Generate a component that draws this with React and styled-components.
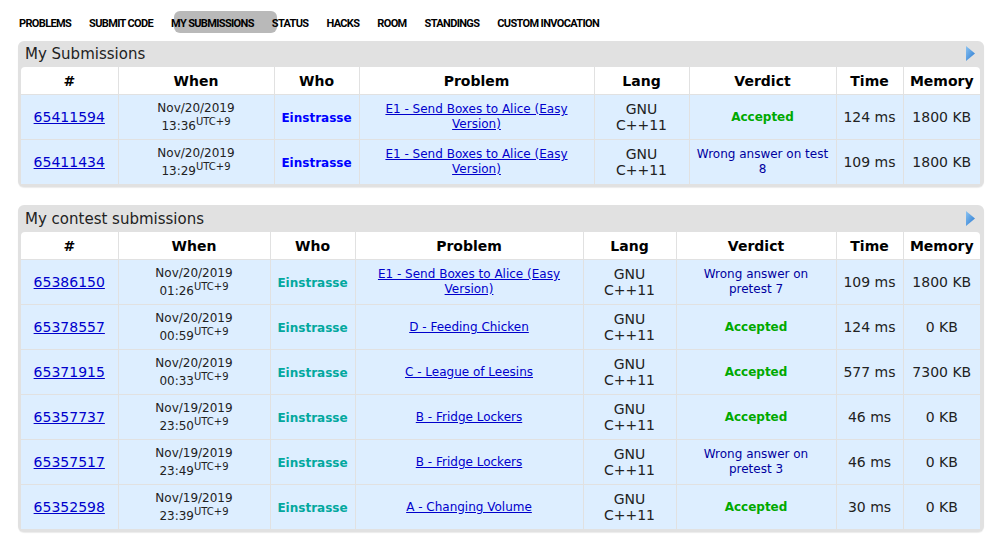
import React from 'react'
import styled, { createGlobalStyle } from 'styled-components'

const GlobalStyle = createGlobalStyle`
    html, body {
        margin: 0;
        padding: 0;
        background: #fff;
    }
    body {
        font-family: "DejaVu Sans", Verdana, sans-serif;
        color: #222;
    }
`

const Page = styled.div`
    padding: 5px 10px 12px 18px;
`

const Menu = styled.ul`
    display: flex;
    align-items: center;
    gap: 18px;
    height: 36px;
    margin: 0;
    padding: 0 0 0 1px;
    list-style: none;
`

const MenuItem = styled.li`
    position: relative;
    font-family: Roboto, "DejaVu Sans Condensed", sans-serif;
    font-weight: bold;
    font-size: 11px;
    line-height: 14px;
    color: #000;
    letter-spacing: -0.65px;
    margin-top: 1px;

    & span {
        position: relative;
    }

    ${(p) => p.$active && `
        &::before {
            content: '';
            position: absolute;
            left: 3px;
            right: -23px;
            top: 50%;
            margin-top: -12.5px;
            height: 22px;
            border-radius: 6px;
            background: #b9b9b9;
        }
    `}
`

const Panel = styled.div`
    background: #e1e1e1;
    border-radius: 6px;
    padding: 0 4px 3px 3px;
    box-shadow: 0 1px 1px rgba(0, 0, 0, 0.08);
    & + & {
        margin-top: 18px;
    }
`

const Caption = styled.div`
    display: flex;
    align-items: center;
    justify-content: space-between;
    height: ${(p) => p.$h}px;
    padding: 0 5px 0 4px;
    font-size: 15px;
    color: #222;
`

const Arrow = styled.svg`
    width: 9px;
    height: 15px;
    margin-top: -1px;
`

const Table = styled.table`
    width: 959px;
    border-collapse: collapse;
    table-layout: fixed;
    background: #fff;
    border-radius: 4px 4px 0 0;
`

const Th = styled.th`
    height: 27px;
    padding: 0;
    font-size: 14px;
    font-weight: bold;
    color: #000;
    text-align: center;
    border-left: 1px solid #e1e1e1;
    border-bottom: 1px solid #e1e1e1;
    &:first-child {
        border-left: none;
    }
`

const Td = styled.td`
    height: 44px;
    padding: 0 6px;
    background: #ddeeff;
    text-align: center;
    vertical-align: middle;
    font-size: ${(p) => p.$size || 14}px;
    line-height: ${(p) => (p.$size === 12 ? 15 : 16)}px;
    border-left: 1px solid #e1e1e1;
    border-top: 1px solid #e1e1e1;
    &:first-child {
        border-left: none;
    }
`

const Link = styled.a`
    color: #0000cc;
    text-decoration: underline;
`

const When = styled.div`
    font-size: 12px;
    line-height: 17px;
    color: #222;

    & sup {
        font-size: 10px;
        line-height: 10px;
        vertical-align: 5px;
    }
`

const Who = styled.span`
    font-size: 12px;
    font-weight: bold;
    color: ${(p) => p.$color};
`

const Verdict = styled.span`
    font-size: 12px;
    line-height: 15px;
    color: ${(p) => (p.$ok ? '#00a900' : '#0000a0')};
    font-weight: ${(p) => (p.$ok ? 'bold' : 'normal')};
`

const menu = ['PROBLEMS', 'SUBMIT CODE', 'MY SUBMISSIONS', 'STATUS', 'HACKS', 'ROOM', 'STANDINGS', 'CUSTOM INVOCATION']

const headers = ['#', 'When', 'Who', 'Problem', 'Lang', 'Verdict', 'Time', 'Memory']

const mine = [
    { id: '65411594', date: 'Nov/20/2019', time: '13:36', problem: 'E1 - Send Boxes to Alice (Easy Version)', ok: true, verdict: 'Accepted', ms: '124 ms', mem: '1800 KB' },
    { id: '65411434', date: 'Nov/20/2019', time: '13:29', problem: 'E1 - Send Boxes to Alice (Easy Version)', ok: false, verdict: 'Wrong answer on test 8', ms: '109 ms', mem: '1800 KB' },
]

const contest = [
    { id: '65386150', date: 'Nov/20/2019', time: '01:26', problem: 'E1 - Send Boxes to Alice (Easy Version)', ok: false, verdict: 'Wrong answer on pretest 7', ms: '109 ms', mem: '1800 KB' },
    { id: '65378557', date: 'Nov/20/2019', time: '00:59', problem: 'D - Feeding Chicken', ok: true, verdict: 'Accepted', ms: '124 ms', mem: '0 KB' },
    { id: '65371915', date: 'Nov/20/2019', time: '00:33', problem: 'C - League of Leesins', ok: true, verdict: 'Accepted', ms: '577 ms', mem: '7300 KB' },
    { id: '65357737', date: 'Nov/19/2019', time: '23:50', problem: 'B - Fridge Lockers', ok: true, verdict: 'Accepted', ms: '46 ms', mem: '0 KB' },
    { id: '65357517', date: 'Nov/19/2019', time: '23:49', problem: 'B - Fridge Lockers', ok: false, verdict: 'Wrong answer on pretest 3', ms: '46 ms', mem: '0 KB' },
    { id: '65352598', date: 'Nov/19/2019', time: '23:39', problem: 'A - Changing Volume', ok: true, verdict: 'Accepted', ms: '30 ms', mem: '0 KB' },
]

const BlueArrow = () => (
    <Arrow viewBox="0 0 9 15">
        <defs>
            <linearGradient id="arr" x1="0" y1="0" x2="1" y2="1">
                <stop offset="0" stopColor="#8cc4f2" />
                <stop offset="1" stopColor="#2677d0" />
            </linearGradient>
        </defs>
        <polygon points="0,0 9,7.5 0,15" fill="url(#arr)" />
    </Arrow>
)

const SubmissionTable = ({ title, rows, widths, whoColor, captionHeight }) => (
    <Panel>
        <Caption $h={captionHeight}>
            <span>{title}</span>
            <BlueArrow />
        </Caption>
        <Table>
            <colgroup>
                {widths.map((w, i) => <col key={i} style={{ width: w }} />)}
            </colgroup>
            <thead>
                <tr>
                    {headers.map((h) => <Th key={h}>{h}</Th>)}
                </tr>
            </thead>
            <tbody>
                {rows.map((r) => (
                    <tr key={r.id}>
                        <Td><Link href="#!">{r.id}</Link></Td>
                        <Td>
                            <When>
                                {r.date}<br />
                                {r.time}<sup>UTC+9</sup>
                            </When>
                        </Td>
                        <Td><Who $color={whoColor}>Einstrasse</Who></Td>
                        <Td $size={12}><Link href="#!">{r.problem}</Link></Td>
                        <Td>GNU<br />C++11</Td>
                        <Td $size={12}><Verdict $ok={r.ok}>{r.verdict}</Verdict></Td>
                        <Td>{r.ms}</Td>
                        <Td>{r.mem}</Td>
                    </tr>
                ))}
            </tbody>
        </Table>
    </Panel>
)

const App = () => (
    <Page>
        <GlobalStyle />
        <Menu>
            {menu.map((m) => (
                <MenuItem key={m} $active={m === 'MY SUBMISSIONS'}>
                    <span>{m}</span>
                </MenuItem>
            ))}
        </Menu>
        <SubmissionTable
            title="My Submissions"
            rows={mine}
            widths={[97, 156, 85, 235, 95, 147, 67, 77]}
            whoColor="#0000ff"
            captionHeight={26}
        />
        <SubmissionTable
            title="My contest submissions"
            rows={contest}
            widths={[97, 152, 85, 228, 93, 160, 67, 77]}
            whoColor="#03a89e"
            captionHeight={27}
        />
    </Page>
)

export default App
